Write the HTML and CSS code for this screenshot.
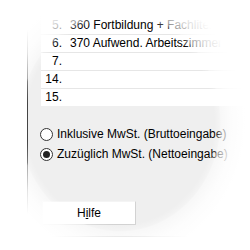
FILE: index.html
```html
<!DOCTYPE html>
<html lang="de">
<head>
<meta charset="utf-8">
<link rel="stylesheet" href="styles.css">
</head>
<body>
<div class="stage">
  <div class="panel">
    <div class="list">
      <div class="row"><span class="num">5.</span><span class="txt">360 Fortbildung + Fachliteratur</span></div>
      <div class="row"><span class="num">6.</span><span class="txt">370 Aufwend. Arbeitszimmer</span></div>
      <div class="row"><span class="num">7.</span><span class="txt"></span></div>
      <div class="row"><span class="num">14.</span><span class="txt"></span></div>
      <div class="row"><span class="num">15.</span><span class="txt"></span></div>
    </div>
    <div class="radios">
      <label class="radio"><span class="dot"></span><span>Inklusive MwSt. (Bruttoeingabe)</span></label>
      <label class="radio"><span class="dot on"></span><span>Zuzüglich MwSt. (Nettoeingabe)</span></label>
    </div>
    <div class="btnrow">
      <div class="btn">H<u>i</u>lfe</div>
    </div>
  </div>
  <div class="lens"></div>
</div>
</body>
</html>
```
FILE: styles.css
```css
html, body {
  margin: 0;
  padding: 0;
  background: #fff;
}
.stage {
  position: relative;
  width: 250px;
  height: 250px;
  overflow: hidden;
  font-family: "Liberation Sans", Arial, sans-serif;
  font-size: 12px;
  color: #000;
}
.panel {
  margin-left: 27px;
  width: 260px;
  border-left: 1px solid #444;
  border-bottom: 1px solid #c4c4c4;
  background: #efefef;
  padding: 0 0 11px 0;
}
.list {
  margin-left: 13px;
  padding-top: 17px;
  background: #fff;
  display: flex;
  flex-direction: column;
}
.row {
  height: 17px;
  border-bottom: 1px solid #e6e6e6;
  display: flex;
  align-items: center;
  line-height: 17px;
}
.row:last-child {
  border-bottom: none;
}
.num {
  width: 21px;
  text-align: right;
}
.txt {
  margin-left: 8px;
  white-space: nowrap;
}
.radios {
  margin-top: 18px;
  margin-left: 12px;
  display: flex;
  flex-direction: column;
}
.radio {
  height: 20px;
  display: flex;
  align-items: center;
  gap: 4px;
  white-space: nowrap;
}
.dot {
  width: 11px;
  height: 11px;
  border: 1px solid #333;
  border-radius: 50%;
  background: #fff;
  display: flex;
  align-items: center;
  justify-content: center;
}
.dot.on::after {
  content: "";
  width: 7px;
  height: 7px;
  border-radius: 50%;
  background: #222;
}
.btnrow {
  margin-top: 37px;
  margin-left: 14px;
}
.btn {
  width: 92px;
  height: 22px;
  background: #fff;
  border: 1px solid #f4f4f4;
  border-right-color: #d2d2d2;
  border-bottom-color: #d2d2d2;
  display: flex;
  align-items: center;
  justify-content: center;
}
.lens {
  position: absolute;
  inset: 0;
  pointer-events: none;
  background: radial-gradient(ellipse 112px 122px at 120px 122px,
    rgba(255,255,255,0) 0%,
    rgba(255,255,255,0) 84%,
    rgba(255,255,255,0.3) 89%,
    rgba(255,255,255,0.55) 90%,
    rgba(255,255,255,0.85) 100%,
    #fff 112%);
}
```
